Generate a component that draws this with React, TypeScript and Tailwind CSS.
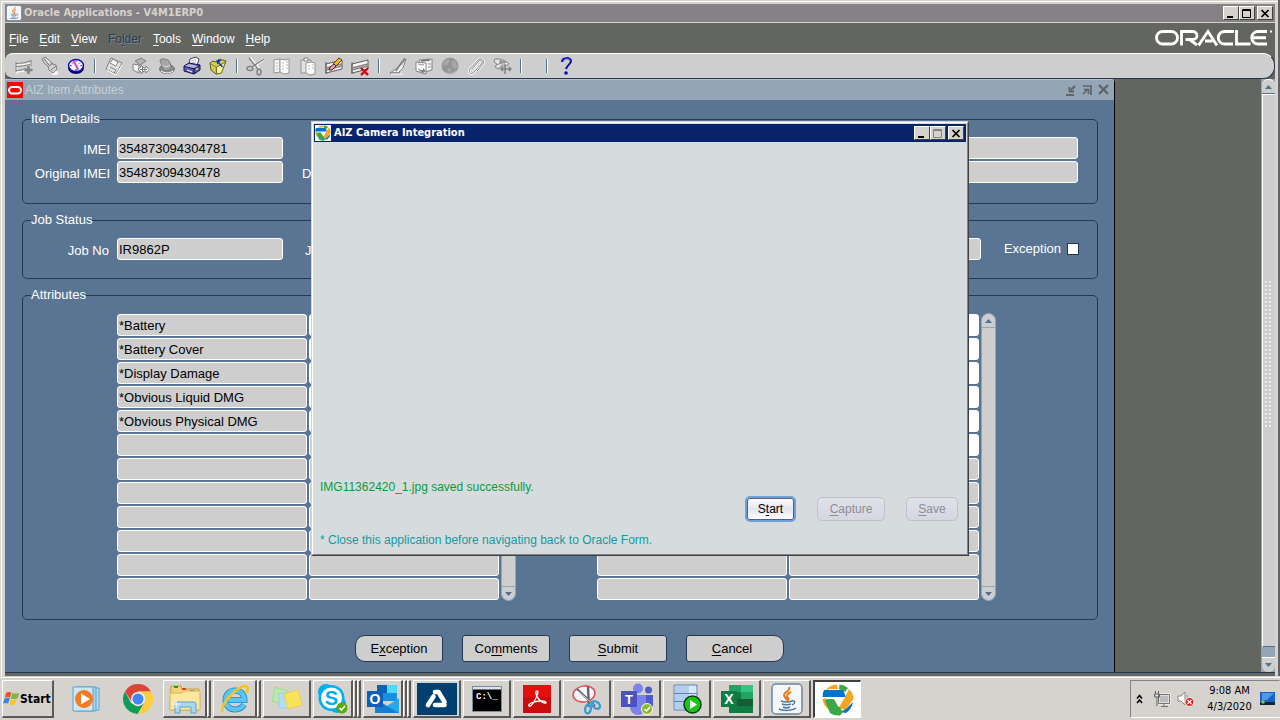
import React, { useState } from "react";
import type { ReactNode } from "react";

type Kids = { children?: ReactNode };

/* ---------- shared drawing helpers ---------- */

function Glyph({ children, size = 20 }: Kids & { size?: number }) {
  return (
    <svg width={size} height={size} viewBox="0 0 20 20" fill="none" aria-hidden="true">
      {children}
    </svg>
  );
}

function Key({ children }: Kids) {
  return <span className="underline decoration-1 underline-offset-2">{children}</span>;
}

/* ---------- toolbar icons ---------- */

const NewIcon = () => (
  <Glyph>
    <path d="M2 7v10M2 8c5 0 10-1 15-2M2 15c4 0 8-1 10-2" stroke="#fff" transform="translate(1 1)" />
    <path d="M2 6v10M2 7.500c5 0 10-1 15-3M2 10.500c4 0 9-1 14-2M2 14.500c4 0 7-1 10-2M17 4v6" stroke="#848284" />
    <path d="M14.500 10v8M10.500 14h8" stroke="#848284" strokeWidth="2.500" />
  </Glyph>
);
const TorchIcon = () => (
  <Glyph>
    <ellipse cx="15" cy="17" rx="3.500" ry="2" fill="#f4f4f4" />
    <path d="M2 3l3-2 4 3 3 4 4 1 1 4-4 4-4-3-1-4-4-3z" fill="#d2d2d2" stroke="#848284" />
    <path d="M4 3l5 6M9 10l4-3M11 14l5-4" stroke="#737373" />
    <path d="M6 3l4 4" stroke="#fff" />
  </Glyph>
);
const NavigatorIcon = () => (
  <Glyph>
    <ellipse cx="10" cy="12" rx="8" ry="6" fill="#00007b" />
    <ellipse cx="10" cy="9.500" rx="7.500" ry="6" fill="#f4f4ff" stroke="#1010a5" strokeWidth="1.500" />
    <path d="M10 4.500v1.500M10 13v2M4 9.500h1.500M14.500 9.500H16M6 6.500l1 1M14 6.500l-1 1" stroke="#2929a5" />
    <path d="M7.500 5l4.500 8" stroke="#e731ce" strokeWidth="1.800" />
    <path d="M11 12l1.500 2" stroke="#00a5a5" strokeWidth="1.200" />
  </Glyph>
);
const SaveIcon = () => (
  <Glyph>
    <path d="M7 2l11 5-6 11-10-5z" fill="#e2e2e2" stroke="#848284" />
    <path d="M9 3l5 3-2 4-6-3z" fill="#fff" stroke="#848284" />
    <path d="M6 11l6 3-2 3" stroke="#848284" />
    <path d="M3 14l9 5 6-10" stroke="#fff" />
  </Glyph>
);
const NextStepIcon = () => (
  <Glyph>
    <path d="M5 5l6-3 5 3-6 4z" fill="#b0b0b0" stroke="#848284" />
    <path d="M3 8l6 1v8l-6-3z" fill="#f0f0f0" stroke="#848284" />
    <path d="M8 13l3-2V9l3 3h2v-2l3 3.500-3 3.500v-2h-2l-3 3v-2z" fill="#fff" stroke="#848284" />
    <path d="M10 13.500h7M12.500 10v7" stroke="#737373" />
  </Glyph>
);
const ResponsibilityIcon = () => (
  <Glyph>
    <ellipse cx="11" cy="13" rx="7.500" ry="4.500" fill="#8c8c8c" stroke="#737373" />
    <path d="M4 4c0 4 3 5 3 9 2 2 7 2 8-1 0-4-1-5-2-7-1-2-8-3-9-1z" fill="#a5a5a5" stroke="#7b7b7b" />
    <path d="M6 9c2 2 6 2 8 0" stroke="#dedede" />
    <path d="M5 15c3 2 8 3 12 0" stroke="#fff" />
  </Glyph>
);
const PrintIcon = () => (
  <Glyph>
    <path d="M8 3l6-2 3 2-2 7-8-1z" fill="#fff" stroke="#424242" />
    <path d="M9 5l5-1M9 7l5-1" stroke="#bdbdbd" />
    <path d="M2 10l5-3 11 2v5l-6 4-10-3z" fill="#5a5aa5" stroke="#10105a" />
    <path d="M2 10l10 3 6-4M12 13v5" stroke="#10105a" />
    <path d="M2.500 10L7 8l9 2-4 2z" fill="#b5b5de" />
    <path d="M5 14l5 2" stroke="#fff" />
    <circle cx="15" cy="13" r="1" fill="#f7e731" />
  </Glyph>
);
const FolderIcon = () => (
  <Glyph>
    <path d="M2 7l3-2 3 1 3-3 7 2-5 12-5 1-5-4z" fill="#d6ce5a" stroke="#5a5a18" />
    <path d="M3 8l5 3 .500 7" stroke="#84842a" />
    <path d="M8.500 11l9-5-4 11-5 1z" fill="#f7ef9c" stroke="#73731c" />
    <path d="M14.500 11L10 6" stroke="#1039c6" strokeWidth="1.600" />
    <path d="M8.500 4h5L9 8.500z" fill="#1039c6" />
  </Glyph>
);
const CutIcon = () => (
  <Glyph>
    <path d="M4 2l9 11M18 3L6 12" stroke="#fff" strokeWidth="2.500" />
    <path d="M3 2l9 11M18 3L6 11" stroke="#848284" strokeWidth="1.500" />
    <ellipse cx="4" cy="12.500" rx="3" ry="2" stroke="#848284" strokeWidth="1.500" />
    <ellipse cx="13" cy="16" rx="2" ry="3" stroke="#848284" strokeWidth="1.500" />
  </Glyph>
);
const CopyIcon = () => (
  <Glyph>
    <path d="M2 4l6-1v13l-6 1z" fill="#f7f7f7" stroke="#949494" />
    <path d="M8 3l5 1 4-1v14l-5 1-4-2z" fill="#fff" stroke="#949494" />
    <path d="M4 7h2M4 10h2M4 13h2M10 7h2M10 10h2M10 13h2M14 6h2M14 9h2M14 12h2" stroke="#b5b5b5" />
  </Glyph>
);
const PasteIcon = () => (
  <Glyph>
    <path d="M3 4h10v13H3z" fill="#e2e2e2" stroke="#949494" />
    <path d="M6 5V2h4v3z" fill="#fff" stroke="#848284" />
    <path d="M8 7l5-1 4 1v11l-5 1-4-2z" fill="#fff" stroke="#949494" />
    <path d="M10 10h2M10 13h2M14 9h2M14 12h2" stroke="#b5b5b5" />
  </Glyph>
);
const RowsBase = () => (
  <>
    <path d="M2 6v12M2 8l16-4v9L2 17z" fill="#f7f7f7" stroke="#5a5a5a" />
    <path d="M2 12l16-4M2 14l16-4" stroke="#848484" strokeWidth="1.500" />
  </>
);
const ClearIcon = () => (
  <Glyph>
    <RowsBase />
    <path d="M9 8l6-6 3 2-6 6z" fill="#f7b521" stroke="#5a4210" />
    <path d="M6 11l4-3 2 2-4 4H5z" fill="#ef9cad" stroke="#422" />
  </Glyph>
);
const DeleteIcon = () => (
  <Glyph>
    <RowsBase />
    <path d="M11 12l7 7M18 12l-7 7" stroke="#d60810" strokeWidth="2.400" />
  </Glyph>
);
const EditIcon = () => (
  <Glyph>
    <path d="M2 17l9-6 7-8-3 9-5 5z" fill="#eee" stroke="#848284" />
    <path d="M17 2l-6 8-3 5M2 17h10" stroke="#848284" strokeWidth="1.500" />
    <path d="M3 18h12" stroke="#fff" />
  </Glyph>
);
const ZoomFormIcon = () => (
  <Glyph>
    <path d="M5 4l13-1v11l-11 3z" fill="#f4f4f4" stroke="#848284" />
    <path d="M2 6l10 1v11L2 15z" fill="#fff" stroke="#848284" />
    <path d="M14 8h3M14 11h3M4 8l6 1" stroke="#949494" />
    <path d="M4 11c1 3 3 3 5 3v-2l3 3-3 2.500V16c-3 0-5-2-5-5z" fill="#848284" />
    <path d="M7 5l9-1" stroke="#737373" strokeWidth="1.500" />
  </Glyph>
);
const GlobeIcon = () => (
  <Glyph>
    <circle cx="10" cy="10" r="8" fill="#949494" stroke="#9c9c9c" />
    <path d="M4 6c2-3 5-3 6-2 0 2-2 2-2 4-1 1-2 0-3 2-1-1-2-2-1-4z" fill="#a9a9a9" />
    <path d="M12 5c3-1 5 2 5 5s-2 3-3 3-1-2-2-3 0-3 0-5z" fill="#a5a5a5" />
    <path d="M8 12c2 0 3 1 3 2s-1 2-2 2-2-3-1-4z" fill="#a9a9a9" />
    <path d="M5 16.500c4 2 9 1 11-2" stroke="#c6c6c6" />
  </Glyph>
);
const ClipIcon = () => (
  <Glyph>
    <path d="M6 13l7-8c2-2 4 0 3 2l-8 9c-3 3-6 1-4-3l8-9c3-3 7 0 5 4l-6 7" stroke="#fff" strokeWidth="2.500" />
    <path d="M6 13l7-8c2-2 4 0 3 2l-8 9c-3 3-6 1-4-3l8-9c3-3 7 0 5 4l-6 7" stroke="#848284" />
  </Glyph>
);
const ToolsIcon = () => (
  <Glyph>
    <path d="M3 3h5l1 3h6l2 2-3 2H9l-2 3-4-2 2-3-3-2z" fill="#e5e5e5" stroke="#848284" />
    <path d="M8 5c2-2 5-1 5 1s-3 3-5 1zM5 9l8-4" stroke="#848284" />
    <path d="M13 8v10M9 13h10M11 11l-2 2 2 2M17 11l2 2-2 2" stroke="#848284" strokeWidth="1.500" />
  </Glyph>
);
const HelpIcon = () => (
  <Glyph>
    <path d="M6 6c0-5 9-5 9-1 0 3-4 4-5 8" stroke="#0808b5" strokeWidth="2" />
    <path d="M7 6c1-4 7-4 7-1" stroke="#5a5ae7" />
    <circle cx="10" cy="17" r="1.800" fill="#0808b5" />
  </Glyph>
);

type Tool = { name: string; icon?: () => ReactNode };
const tools: Tool[] = [
  { name: "New", icon: NewIcon },
  { name: "Find", icon: TorchIcon },
  { name: "Show Navigator", icon: NavigatorIcon },
  { name: "|" },
  { name: "Save", icon: SaveIcon },
  { name: "Next Step", icon: NextStepIcon },
  { name: "Switch Responsibility", icon: ResponsibilityIcon },
  { name: "Print", icon: PrintIcon },
  { name: "Close Form", icon: FolderIcon },
  { name: "|" },
  { name: "Cut", icon: CutIcon },
  { name: "Copy", icon: CopyIcon },
  { name: "Paste", icon: PasteIcon },
  { name: "Clear Record", icon: ClearIcon },
  { name: "Delete", icon: DeleteIcon },
  { name: "|" },
  { name: "Edit Field", icon: EditIcon },
  { name: "Zoom", icon: ZoomFormIcon },
  { name: "Translations", icon: GlobeIcon },
  { name: "Attachments", icon: ClipIcon },
  { name: "Folder Tools", icon: ToolsIcon },
  { name: "|" },
  { name: " " },
  { name: "|" },
  { name: "Window Help", icon: HelpIcon },
];

/* ---------- logos ---------- */

function OracleLogo() {
  return (
    <svg width="118" height="18" viewBox="0 0 118 18" fill="none" stroke="#fff" strokeWidth="2.800" role="img" aria-label="Oracle">
      <rect x="1.500" y="2.500" width="21" height="12.500" rx="6.250" />
      <path d="M26.500 16.400V2.500H38a4 4 0 0 1 0 8H30.500M34.500 10.500l7.500 5.500" />
      <path d="M43.500 16.400L53 2.500l9 13.900M50 12h7.500" />
      <path d="M79 2.500H69.500a6.250 6.250 0 0 0 0 12.500H78" />
      <path d="M81.500 1v14H95.500" />
      <path d="M112 2.500H103a6.250 6.250 0 0 0 0 12.500h9M98 8.750h13" />
      <path d="M115 2.500h2" strokeWidth="2" />
    </svg>
  );
}

function SwirlLogo({ size }: { size: number }) {
  return (
    <svg width={size} height={size} viewBox="0 0 32 32" aria-hidden="true">
      <path d="M3 7A16 16 0 0 1 15 .500L16 5H7z" fill="#f7a51c" />
      <path d="M17.500 .500A15.500 15.500 0 0 1 26 4l-3 4-6-3z" fill="#39a845" />
      <path d="M2 6h19l3 7H.500Q.500 9 2 6z" fill="#0073cf" />
      <path d="M27 5c3 3 4.500 6 4.500 10l-8 11-7-2 6-10z" fill="#f7a51c" />
      <path d="M31 18c-1 5-3 8-7 11l-6-1 6-3z" fill="#0073cf" />
      <path d="M.500 15l3-1 4 12A15 15 0 0 1 .500 15z" fill="#f7a51c" />
      <path d="M5 15h7l9 13-3 3.400A15 15 0 0 1 8 29L3 17z" fill="#39a845" />
      <path d="M12 15h9l-4.500 8z" fill="#fff" />
    </svg>
  );
}

function JavaLogo({ size }: { size: number }) {
  return (
    <svg width={size} height={size} viewBox="0 0 32 32" fill="none" aria-hidden="true">
      <rect x="1" y="1" width="30" height="30" rx="4" fill="#f4f7f9" stroke="#6b87a0" strokeWidth="1.500" />
      <path d="M18 4c2 4-5 5-5 8 0 2 2 3 3 5M20 9c-4 2-5 4-3 6 1 1 0 2-1 3" stroke="#e8761a" strokeWidth="2" />
      <path d="M10 18c3 1 8 1 11 0M11 21c2 1 7 1 9 0M12 24c2 1 5 1 7 0M21 18c4-1 3 3 0 4M8 26c4 2 13 2 17-1" stroke="#50789b" strokeWidth="1.500" />
    </svg>
  );
}

/* ---------- window controls ---------- */

const raised =
  "border border-t-white border-l-white border-r-[#424142] border-b-[#424142] bg-[#d6d3ce]";

function CaptionButton({ kind, dim = false }: { kind: "min" | "max" | "close"; dim?: boolean }) {
  const ink = dim ? "#848284" : "#000";
  const label = kind === "min" ? "Minimize" : kind === "max" ? "Maximize" : "Close";
  return (
    <button type="button" aria-label={label} className={`flex h-[14px] w-[16px] items-center justify-center ${raised}`}>
      <svg width="12" height="11" viewBox="0 0 12 11" fill="none" stroke={ink} aria-hidden="true">
        {kind === "min" && <path d="M2 9h6" strokeWidth="2" />}
        {kind === "max" && <path d="M1.500 1.500h8v8h-8zM1.500 2.500h8" />}
        {kind === "close" && <path d="M2.500 2l7 7M9.500 2l-7 7" strokeWidth="1.700" />}
      </svg>
    </button>
  );
}

/* ---------- form pieces ---------- */

const fieldBox =
  "h-[22px] rounded-[3px] border border-white px-px text-[13px] leading-4 text-black outline-none";

function Field({ id, label, value = "", labelClass = "w-[87px] text-right", inputClass = "w-[166px]" }: {
  id: string; label?: string; value?: string; labelClass?: string; inputClass?: string;
}) {
  return (
    <div className="flex items-center gap-[7px]">
      {label && <label htmlFor={id} className={`pt-1 leading-4 whitespace-nowrap text-white ${labelClass}`}>{label}</label>}
      <input id={id} aria-label={label ? undefined : id} defaultValue={value} className={`bg-[#cecece] ${fieldBox} ${inputClass}`} />
    </div>
  );
}

function Group({ title, className = "", children }: Kids & { title: string; className?: string }) {
  return (
    <fieldset className={`min-w-0 rounded-[5px] border border-[#263751] ${className}`}>
      <legend className="ml-2 h-4 leading-4 text-white">{title}</legend>
      {children}
    </fieldset>
  );
}

function MiniScroll() {
  return (
    <div className="flex w-[15px] flex-col justify-between overflow-hidden rounded-full border border-[#94a6b5] bg-[#cecece]">
      <button type="button" aria-label="Scroll up" className="flex h-[14px] items-center justify-center border-b border-[#94a6b5]">
        <svg width="7" height="4" viewBox="0 0 7 4" aria-hidden="true"><path d="M0 4L3.500 0 7 4z" fill="#52718f" /></svg>
      </button>
      <button type="button" aria-label="Scroll down" className="flex h-[14px] items-center justify-center border-t border-[#94a6b5]">
        <svg width="7" height="4" viewBox="0 0 7 4" aria-hidden="true"><path d="M0 0h7L3.500 4z" fill="#52718f" /></svg>
      </button>
    </div>
  );
}

function AttributeBlock({ id, names, editable }: { id: string; names: string[]; editable: number }) {
  const rows = Array.from({ length: 12 }, (_, i) => i);
  return (
    <div className="flex gap-[2px]">
      <div className="flex flex-col gap-[2px] py-px">
        {rows.map((i) => (
          <div key={i} className="flex gap-[2px]">
            <input aria-label={`${id} attribute ${i + 1}`} defaultValue={names[i] ?? ""} className={`w-[190px] bg-[#cecece] ${fieldBox}`} />
            <input aria-label={`${id} value ${i + 1}`} className={`w-[190px] ${i < editable ? "bg-white" : "bg-[#cecece]"} ${fieldBox}`} />
          </div>
        ))}
      </div>
      <MiniScroll />
    </div>
  );
}

function FormButton({ className, children }: Kids & { className: string }) {
  return (
    <button type="button" className={`h-[27px] border border-[#263751] bg-[#cecece] text-black ${className}`}>
      {children}
    </button>
  );
}

/* ---------- camera dialog ---------- */

function CameraDialog() {
  return (
    <section
      role="dialog"
      aria-label="AIZ Camera Integration"
      className="absolute top-[121px] left-[311px] flex h-[435px] w-[658px] flex-col border border-t-[#d6d3ce] border-l-[#d6d3ce] border-r-[#424142] border-b-[#424142] bg-[#d6dbde] text-[12px]"
    >
      <div className="flex flex-1 flex-col border border-t-white border-l-white border-r-[#848284] border-b-[#848284]">
        <header className="mx-px mt-px flex h-[18px] items-center bg-[#08246b] pr-[2px] pl-px">
          <span className="flex bg-white"><SwirlLogo size={16} /></span>
          <h2 className="flex-1 pl-[3px] font-['DejaVu_Sans_Condensed','DejaVu_Sans',sans-serif] text-[11px] font-bold text-white">
            AIZ Camera Integration
          </h2>
          <CaptionButton kind="min" />
          <CaptionButton kind="max" dim />
          <span className="w-[2px]" />
          <CaptionButton kind="close" />
        </header>
        <div className="flex flex-1 flex-col justify-end px-[7px] pb-[6px]">
          <p className="leading-4 text-[#0a9b39]">IMG11362420_1.jpg saved successfully.</p>
          <div className="flex items-center justify-end pt-px pr-[2px] pb-[10px]">
            <button type="button" className="h-[26px] w-[51px] rounded-[5px] border-2 border-[#6f9fd6] bg-linear-to-b from-white via-[#e4e4ee] to-white text-black ring-1 ring-[#5a6068] ring-inset">
              S<Key>t</Key>art
            </button>
            <button type="button" disabled className="ml-[21px] h-[24px] w-[68px] rounded-[5px] border border-[#c0c0ca] bg-linear-to-b from-[#dfe2e7] to-[#d6d6e2] text-[#8c8c94]">
              <Key>C</Key>apture
            </button>
            <button type="button" disabled className="ml-[21px] h-[24px] w-[52px] rounded-[5px] border border-[#c0c0ca] bg-linear-to-b from-[#dfe2e7] to-[#d6d6e2] text-[#8c8c94]">
              <Key>S</Key>ave
            </button>
          </div>
          <p className="leading-4 text-[#109ca0]">* Close this application before navigating back to Oracle Form.</p>
        </div>
      </div>
    </section>
  );
}

/* ---------- taskbar ---------- */

const WindowsFlag = () => (
  <svg width="17" height="17" viewBox="0 0 20 20" aria-hidden="true">
    <path d="M4 3c2-1 4-1 6 0L8 9C6 8 4 8 2 9z" fill="#e8502a" />
    <path d="M11 3.500c2 1 5 1 8 0L17 10c-3 1-5 1-8 0z" fill="#7ab93c" />
    <path d="M2 10c2-1 4-1 6 0l-2 6c-2-1-4-1-6 0z" fill="#3a84d8" />
    <path d="M9 11c2 1 5 1 7 0l-2 6c-2 1-4 1-7 0z" fill="#fbc52d" />
  </svg>
);

const MediaIcon = () => (
  <svg width="28" height="28" viewBox="0 0 28 28" aria-hidden="true">
    <path d="M7 3h20v22H7z" fill="#b9dcf1" stroke="#5ba3cf" />
    <path d="M4 2h20v24H4z" fill="#a7d2ee" stroke="#5ba3cf" />
    <path d="M1 2h20v24H1z" fill="#cfe6f5" stroke="#5ba3cf" />
    <circle cx="12" cy="14" r="9" fill="#f47b20" />
    <path d="M9 8.500v11l9-5.500z" fill="#fff" />
  </svg>
);
const ChromeIcon = () => (
  <svg width="30" height="30" viewBox="0 0 30 30" aria-hidden="true">
    <path d="M2 7.500A15 15 0 0 1 28 7.500H15L9 18z" fill="#db4437" />
    <path d="M28 7.500A15 15 0 0 1 14.500 30L21.500 19l.5-8-7-3.500z" fill="#fdcd40" />
    <path d="M2 7.500A15 15 0 0 0 14.500 30l6.500-11-6 3.500-7-3.500z" fill="#0f9d58" />
    <circle cx="15" cy="15" r="7" fill="#f1f1f1" />
    <circle cx="15" cy="15" r="5.500" fill="#4285f4" />
  </svg>
);
const ExplorerIcon = () => (
  <svg width="34" height="30" viewBox="0 0 34 30" aria-hidden="true">
    <path d="M3 2h10l1 3h17v21H2z" fill="#f3d27a" stroke="#c9a03c" />
    <path d="M6 2h4v2H6z" fill="#1ca01c" /><path d="M14 4h4v2h-4z" fill="#d8472b" /><path d="M22 6h4v2h-4z" fill="#3b8de0" />
    <path d="M2 9h12l2-2h16v19H2z" fill="#fbe7a0" stroke="#d8b455" />
    <path d="M7 29v-9q0-2 2-2h17q2 0 2 2v9h-5v-6H12v6z" fill="#a8d8f0" stroke="#5ba4cc" />
    <path d="M8 16v8M4 20h8" stroke="#fff" />
  </svg>
);
const IeIcon = () => (
  <svg width="30" height="30" viewBox="0 0 30 30" fill="none" aria-hidden="true">
    <path d="M24 20.500c-2 3.500-5 5-9 5-5.500 0-9.500-4-9.500-9.500S9.500 6.500 15 6.500s9.500 4 9.500 9.500H9" stroke="#1e88cf" strokeWidth="6" />
    <path d="M24 20.500c-2 3.500-5 5-9 5-5.500 0-9.500-4-9.500-9.500S9.500 6.500 15 6.500s9.500 4 9.500 9.500H9" stroke="#5cc4f2" strokeWidth="4.400" />
    <path d="M3 28C-1 22 16 3 25 2c4 0 3 4 1 7" stroke="#f5c518" strokeWidth="2.600" />
  </svg>
);
const NotesIcon = () => (
  <svg width="32" height="28" viewBox="0 0 32 28" aria-hidden="true">
    <path d="M4 2l13 4-4 14L1 16z" fill="#b9e8a8" stroke="#a4dc92" />
    <path d="M8 8h14v15H8z" fill="#b5dcf5" stroke="#a0cfee" />
    <path d="M13 9l14-4 4 15-14 4z" fill="#fbe25d" stroke="#ecd04a" />
  </svg>
);
const SkypeIcon = () => (
  <svg width="32" height="32" viewBox="0 0 32 32" aria-hidden="true">
    <circle cx="9" cy="9" r="8" fill="#00aff0" /><circle cx="20" cy="21" r="9" fill="#00aff0" /><circle cx="14.500" cy="15" r="13" fill="#00aff0" />
    <circle cx="14.500" cy="15" r="10.500" fill="#fff" />
    <text x="14.500" y="22" textAnchor="middle" fontFamily="Liberation Sans, sans-serif" fontWeight="700" fontSize="20" fill="#00aff0">S</text>
    <circle cx="25" cy="25" r="5.500" fill="#5ea90a" />
    <path d="M22.500 25l2 2 3.500-4" stroke="#fff" strokeWidth="1.500" fill="none" />
  </svg>
);
const OutlookIcon = () => (
  <svg width="34" height="30" viewBox="0 0 34 30" aria-hidden="true">
    <path d="M11 1h20v16H11z" fill="#1490df" /><path d="M21 1h10v8H21z" fill="#50d9ff" /><path d="M11 1h10v8H11z" fill="#0a64b4" />
    <path d="M9 15l12 7 12-8v15H9z" fill="#28a8ea" /><path d="M9 15l24 14H9z" fill="#1580d0" />
    <path d="M1 7h16v16H1z" fill="#0f5fb5" />
    <text x="9" y="20" textAnchor="middle" fontFamily="Liberation Sans, sans-serif" fontWeight="700" fontSize="14" fill="#fff">O</text>
  </svg>
);
const TriangleAppIcon = () => (
  <svg width="40" height="32" viewBox="0 0 40 32" aria-hidden="true">
    <path d="M0 0h40v32H0z" fill="#00406f" />
    <path d="M18 9h3.500l6 10M16.500 13.500L11 22M18 22h9.500" stroke="#fff" strokeWidth="4.600" strokeLinecap="round" strokeLinejoin="round" fill="none" />
  </svg>
);
const TerminalIcon = () => (
  <svg width="30" height="26" viewBox="0 0 30 26" aria-hidden="true">
    <path d="M.5.500h29v25H.5z" fill="#000" stroke="#7b8a98" /><path d="M1 1h28v2.500H1z" fill="#d8e2ec" />
    <text x="4" y="13" fontFamily="Liberation Mono, monospace" fontWeight="700" fontSize="9" fill="#fff">C:\_</text>
  </svg>
);
const AcrobatIcon = () => (
  <svg width="28" height="28" viewBox="0 0 28 28" aria-hidden="true">
    <path d="M0 0h28v28H0z" fill="#c90c0c" /><path d="M0 0h28v12H0z" fill="#e41010" />
    <path d="M14 6c-3 0 0 9 7 12 4 1 2-3-4-2-5 0-13 3-11 5s8-8 9-14c0-1-.5-1-1-1z" fill="none" stroke="#fff" strokeWidth="1.300" />
  </svg>
);
const SnipIcon = () => (
  <svg width="32" height="32" viewBox="0 0 32 32" fill="none" aria-hidden="true">
    <ellipse cx="13" cy="11" rx="11" ry="8" fill="#f5f5fa" stroke="#e05050" strokeWidth="1.500" transform="rotate(-10 13 11)" />
    <path d="M6 6l18 17M17 4l1 20" stroke="#5a6670" strokeWidth="2.400" />
    <path d="M7 8l16 14" stroke="#cfd6dc" />
    <ellipse cx="25" cy="22" rx="4.500" ry="3" stroke="#3c9bd6" strokeWidth="2.400" transform="rotate(40 25 22)" />
    <ellipse cx="17" cy="26" rx="2.800" ry="4.500" stroke="#3c9bd6" strokeWidth="2.400" transform="rotate(10 17 26)" />
  </svg>
);
const TeamsIcon = () => (
  <svg width="34" height="32" viewBox="0 0 34 32" aria-hidden="true">
    <circle cx="18" cy="5.500" r="5" fill="#7b83eb" /><circle cx="28.500" cy="7" r="3.500" fill="#5059c9" />
    <path d="M22 12h11v10a6 6 0 0 1-11 3z" fill="#5059c9" /><path d="M10 12h16v12a8 8 0 0 1-16 0z" fill="#7b83eb" />
    <path d="M1 8h16v16H1z" fill="#4b53bc" />
    <text x="9" y="20.500" textAnchor="middle" fontFamily="Liberation Sans, sans-serif" fontWeight="700" fontSize="13" fill="#fff">T</text>
    <circle cx="27" cy="26" r="5.500" fill="#8cb82b" stroke="#fff" /><path d="M24.500 26l2 2 3.500-4" stroke="#fff" strokeWidth="1.500" fill="none" />
  </svg>
);
const ListRunIcon = () => (
  <svg width="30" height="30" viewBox="0 0 30 30" aria-hidden="true">
    <path d="M2 1h23v25H2z" fill="#dce9f8" stroke="#5b83b8" /><path d="M2 9.500h23M2 17.500h23" stroke="#5b83b8" />
    <path d="M3 2h14v7H3zM3 10h14v7H3zM3 18h14v7H3z" fill="#b3cdec" />
    <circle cx="20.500" cy="20.500" r="8.500" fill="#17c717" stroke="#063d06" strokeWidth="1.500" /><path d="M18 16v9l7-4.500z" fill="#fff" />
  </svg>
);
const ExcelIcon = () => (
  <svg width="34" height="30" viewBox="0 0 34 30" aria-hidden="true">
    <path d="M9 1h24v28H9z" fill="#21a366" /><path d="M21 1h12v7H21z" fill="#33c481" /><path d="M9 8h12v7H9zM9 22h24v7H9z" fill="#107c41" /><path d="M9 15h24v7H9z" fill="#185c37" /><path d="M21 8h12v7H21z" fill="#21a366" />
    <path d="M1 7h16v16H1z" fill="#107c41" />
    <text x="9" y="20" textAnchor="middle" fontFamily="Liberation Sans, sans-serif" fontWeight="700" fontSize="14" fill="#fff">X</text>
  </svg>
);

type Task = { name: string; icon: ReactNode; stack?: number; active?: boolean };
const tasks: Task[] = [
  { name: "File Explorer", icon: <ExplorerIcon />, stack: 1 },
  { name: "Internet Explorer", icon: <IeIcon />, stack: 1 },
  { name: "Sticky Notes", icon: <NotesIcon /> },
  { name: "Skype", icon: <SkypeIcon />, stack: 2 },
  { name: "Outlook", icon: <OutlookIcon />, stack: 2 },
  { name: "Drive", icon: <TriangleAppIcon /> },
  { name: "Command Prompt", icon: <TerminalIcon /> },
  { name: "Acrobat", icon: <AcrobatIcon /> },
  { name: "Snipping Tool", icon: <SnipIcon /> },
  { name: "Teams", icon: <TeamsIcon /> },
  { name: "Job Runner", icon: <ListRunIcon /> },
  { name: "Excel", icon: <ExcelIcon /> },
  { name: "Java", icon: <JavaLogo size={32} /> },
  { name: "AIZ Camera Integration", icon: <SwirlLogo size={32} />, active: true },
];

const taskEdge = "h-[38px] border-t border-l border-t-white border-l-white border-r-2 border-b-2 border-r-[#5a595a] border-b-[#5a595a]";

function TaskButton({ task }: { task: Task }) {
  if (task.active) {
    return (
      <button type="button" aria-label={task.name} className="flex h-[38px] w-[48px] items-center justify-center border-t-2 border-l-2 border-r border-b border-t-[#424142] border-l-[#424142] border-r-white border-b-white bg-white">
        {task.icon}
      </button>
    );
  }
  return (
    <div className="flex w-[48px]">
      <button type="button" aria-label={task.name} className={`flex flex-1 items-center justify-center overflow-hidden ${taskEdge}`}>
        {task.icon}
      </button>
      {Array.from({ length: task.stack ?? 0 }, (_, i) => (
        <span key={i} className={`w-1 ${taskEdge}`} />
      ))}
    </div>
  );
}

function Taskbar() {
  return (
    <footer className="flex h-[44px] border-t border-t-[#d6d3ce] bg-[#d6d3ce] font-['DejaVu_Sans_Condensed','DejaVu_Sans',sans-serif]">
      <div className="flex min-w-0 flex-1 items-start gap-[2px] border-t border-white pt-[2px] pl-[2px]">
        <button type="button" className={`flex w-[52px] items-center text-[12px] font-bold text-black ${taskEdge}`}>
          <WindowsFlag />
          <span>Start</span>
        </button>
        <button type="button" aria-label="Media Player" className="flex h-[38px] w-[59px] items-center justify-center"><MediaIcon /></button>
        <button type="button" aria-label="Chrome" className="flex h-[38px] w-[44px] items-center justify-center pr-[3px]"><ChromeIcon /></button>
        {tasks.map((t) => <TaskButton key={t.name} task={t} />)}
      </div>
      <div className="flex w-[150px] items-start border-t border-white pt-[2px]">
        <div className="flex h-[38px] w-full items-center border border-t-[#848284] border-l-[#848284] border-r-transparent border-b-white">
          <svg className="ml-[5px]" width="8" height="10" viewBox="0 0 8 10" fill="none" stroke="#000" strokeWidth="1.500" aria-hidden="true"><path d="M1 4.500l2.500-3 2.500 3M1 9l2.500-3L6 9" /></svg>
          <svg className="ml-[9px]" width="18" height="18" viewBox="0 0 18 18" fill="none" aria-hidden="true">
            <path d="M5.500 4.500h11v9h-11z" fill="#bdbdbd" stroke="#fff" strokeWidth="2" /><path d="M5.500 4.500h11v9h-11zM8 16.500h7M11 14v2" stroke="#737373" />
            <path d="M2.500 1v3M5.500 1v3M1.500 4h5v3h-5zM4 7v9" stroke="#636363" />
          </svg>
          <svg className="ml-[6px]" width="18" height="18" viewBox="0 0 18 18" fill="none" aria-hidden="true">
            <path d="M1 6h3l4-4v13l-4-4H1z" fill="#fff" stroke="#848484" /><path d="M10 5c1 2 1 4 0 6" stroke="#9a9a9a" />
            <circle cx="12.500" cy="12" r="4.500" fill="#e02020" stroke="#fff" /><path d="M10.500 10l4 4M14.500 10l-4 4" stroke="#fff" strokeWidth="1.300" />
          </svg>
          <time className="flex-1 pl-1 text-center text-[11px] leading-4 text-black">9:08 AM<br />4/3/2020</time>
          <svg className="mr-1" width="15" height="14" viewBox="0 0 15 14" aria-hidden="true">
            <path d="M0 0h15v11H0z" fill="#1b62c4" /><path d="M2 1h12L7 8H2z" fill="#4d9aec" /><path d="M0 10h15v3H0z" fill="#14233a" /><circle cx="3" cy="10" r="1.800" fill="#8bc34a" />
          </svg>
        </div>
      </div>
    </footer>
  );
}

/* ---------- page ---------- */

const menus: [string, string, string][] = [
  ["", "F", "ile"], ["", "E", "dit"], ["", "V", "iew"], ["Fo", "l", "der"],
  ["", "T", "ools"], ["", "W", "indow"], ["", "H", "elp"],
];

export default function App() {
  const [exception, setException] = useState(false);
  return (
    <div className="relative flex min-h-screen flex-col bg-[#d6d3ce] font-['Liberation_Sans',Arial,sans-serif] text-[13px]">
      <div className="flex flex-1 flex-col border-r-2 border-r-[#636163] pt-px">
        <div className="ml-px flex flex-1 flex-col border-t border-l border-white pt-[2px] pr-[3px] pl-[3px]">
          <header className="flex h-[18px] items-center bg-[#848284] pr-[2px] pl-px">
            <JavaLogo size={16} />
            <h1 className="flex-1 pl-[2px] font-['DejaVu_Sans_Condensed','DejaVu_Sans',sans-serif] text-[11px] font-bold text-[#d6d3ce]">
              Oracle Applications - V4M1ERP0
            </h1>
            <CaptionButton kind="min" />
            <CaptionButton kind="max" />
            <span className="w-[2px]" />
            <CaptionButton kind="close" />
          </header>

          <nav className="mt-px flex h-[30px] items-center bg-[#636561] pr-[2px] pl-1 text-white">
            <div className="flex flex-1 gap-[11px] pt-px text-[12px]">
              {menus.map(([a, k, b]) => (
                <button key={k + b} type="button" disabled={a !== ""} className={a ? "text-[#2c3a4c] [text-shadow:1px_1px_#7d8894]" : ""}>
                  {a}<Key>{k}</Key>{b}
                </button>
              ))}
            </div>
            <OracleLogo />
          </nav>

          <div className="bg-[#636561]">
            <div role="toolbar" className="flex h-[26px] items-center rounded-l-[8px] rounded-r-[12px] border-t border-r border-b border-t-white border-r-[#263751] border-b-[#263751] bg-[#cecece] pl-[6px]">
              {tools.map((t, i) =>
                t.name === "|" ? (
                  <span key={i} className="mx-[5px] h-[14px] w-[2px] border-r border-l border-r-white border-l-[#52718f]" />
                ) : t.icon ? (
                  <button key={i} type="button" aria-label={t.name} className="flex w-[26px] justify-center">{t.icon()}</button>
                ) : (
                  <span key={i} className="w-[14px]" />
                )
              )}
            </div>
          </div>

          <main className="flex flex-1 bg-[#636561]">
            <section className="flex min-w-0 flex-1 flex-col rounded-tr-[4px] border-t border-r border-t-[#b5c3ce] border-r-black bg-[#5a7594]">
              <header className="flex h-[20px] items-center gap-[2px] bg-[#94a6b5] pr-1 pl-[2px] text-[12px] text-[#c6cfd6]">
                <svg width="16" height="16" viewBox="0 0 16 16" aria-hidden="true">
                  <path d="M0 0h16v16H0z" fill="#f00" /><rect x="2" y="5" width="12" height="6.500" rx="3.200" fill="none" stroke="#fff" strokeWidth="2" />
                </svg>
                <h2 className="flex-1">AIZ Item Attributes</h2>
                <svg width="46" height="14" viewBox="0 0 46 14" fill="none" stroke="#5e6468" strokeWidth="2" aria-hidden="true">
                  <path d="M2 12h8M11 3L7 7M5.500 4v4.500H10" /><path d="M19 3h8v9M19 11l5-5M20 6.500h4.500V11" strokeWidth="1.700" /><path d="M35 2l9 9M44 2l-9 9" strokeWidth="2.400" />
                </svg>
              </header>

              <form className="flex flex-col gap-2 pt-[11px] pr-4 pl-[17px]" onSubmit={(e) => e.preventDefault()}>
                <Group title="Item Details">
                  <div className="flex justify-between pt-[10px] pr-[19px] pb-[20px]">
                    <div className="flex flex-col gap-[2px]">
                      <Field id="imei" label="IMEI" value="354873094304781" />
                      <Field id="original-imei" label="Original IMEI" value="35487309430478" />
                    </div>
                    <div className="flex flex-1 flex-col justify-end pl-[19px]">
                      <Field id="d-field" label="D" labelClass="" />
                    </div>
                    <div className="flex flex-col gap-[2px]">
                      <Field id="detail-1" inputClass="w-[190px]" />
                      <Field id="detail-2" inputClass="w-[190px]" />
                    </div>
                  </div>
                </Group>

                <Group title="Job Status">
                  <div className="flex items-center pt-[10px] pr-[18px] pb-[18px]">
                    <Field id="job-no" label="Job No" value="IR9862P" labelClass="w-[87px] pr-px text-right" />
                    <div className="flex-1 pl-[22px]"><Field id="j-field" label="J" labelClass="" /></div>
                    <Field id="status" inputClass="w-[190px]" />
                    <label htmlFor="exception" className="pr-[6px] pl-[23px] leading-4 text-white">Exception</label>
                    <input
                      id="exception"
                      type="checkbox"
                      checked={exception}
                      onChange={(e) => setException(e.target.checked)}
                      className="h-3 w-3 appearance-none border border-[#263751] bg-white checked:bg-[#263751]"
                    />
                  </div>
                </Group>

                <Group title="Attributes">
                  <div className="flex gap-[81px] pt-[10px] pb-[18px] pl-[94px]">
                    <AttributeBlock id="left" editable={5} names={["*Battery", "*Battery Cover", "*Display Damage", "*Obvious Liquid DMG", "*Obvious Physical DMG"]} />
                    <AttributeBlock id="right" editable={6} names={[]} />
                  </div>
                </Group>

                <div className="flex justify-center gap-[19px] pt-[7px] pb-[10px] pl-[19px]">
                  <FormButton className="w-[88px] rounded-l-[10px] rounded-r-[3px]">E<Key>x</Key>ception</FormButton>
                  <FormButton className="w-[88px] rounded-[3px]">Co<Key>m</Key>ments</FormButton>
                  <FormButton className="w-[98px] rounded-[3px]"><Key>S</Key>ubmit</FormButton>
                  <FormButton className="w-[98px] rounded-l-[3px] rounded-r-[10px] pr-[6px]"><Key>C</Key>ancel</FormButton>
                </div>
              </form>
            </section>

            <div className="w-[146px]" />

            <div className="flex w-[14px] flex-col bg-[#94a6b5] pl-px">
              <button type="button" aria-label="Page up" className="flex h-[15px] items-center justify-center rounded-t-[6px] border-t border-b border-t-white border-b-[#52718f] bg-[#cecece]">
                <svg width="7" height="4" viewBox="0 0 7 4" aria-hidden="true"><path d="M0 4L3.500 0 7 4z" fill="#52718f" /></svg>
              </button>
              <div className="flex flex-1 items-start justify-center border-t border-b border-l border-t-white border-b-[#52718f] border-l-white bg-[#cecece] pt-[186px]">
                <span className="h-[146px] w-2 bg-[radial-gradient(circle_at_1px_1px,#eee_1px,#b5bdc5_1px,transparent_2px)] bg-[size:4px_4px]" />
              </div>
              <div className="h-[10px]" />
              <button type="button" aria-label="Page down" className="flex h-[15px] items-center justify-center rounded-b-[6px] border-t border-t-white bg-[#cecece]">
                <svg width="7" height="4" viewBox="0 0 7 4" aria-hidden="true"><path d="M0 0h7L3.500 4z" fill="#52718f" /></svg>
              </button>
            </div>
          </main>
          <div className="h-1 border-t border-[#263751] bg-[#636561]" />
        </div>
      </div>

      <Taskbar />
      <CameraDialog />
    </div>
  );
}
